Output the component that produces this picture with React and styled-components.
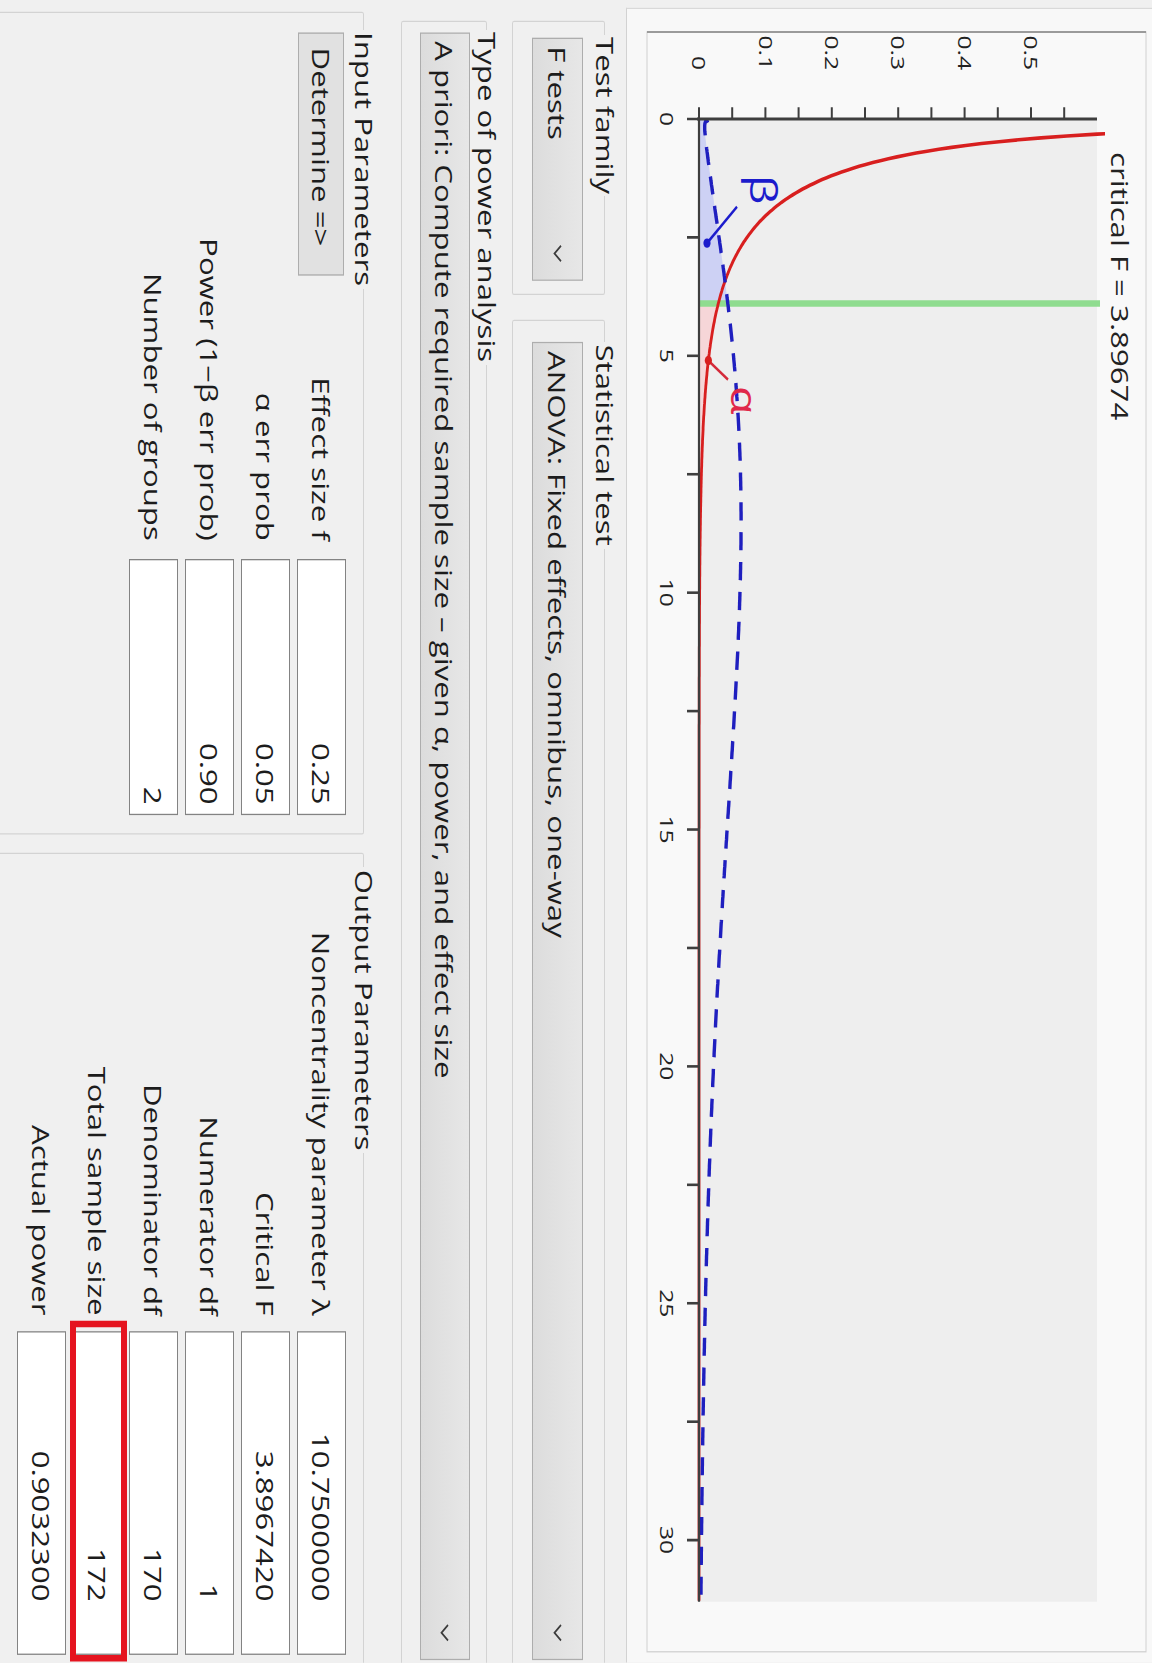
import React from 'react';
import styled, { createGlobalStyle } from 'styled-components';

const GlobalStyle = createGlobalStyle`
  html, body {
    margin: 0;
    padding: 0;
    background: #f0f0f0;
    overflow: hidden;
  }
`;

// ---- distribution math for the plot ----
const LANCZOS = [
  0.99999999999980993, 676.5203681218851, -1259.1392167224028,
  771.32342877765313, -176.61502916214059, 12.507343278686905,
  -0.13857109526572012, 9.9843695780195716e-6, 1.5056327351493116e-7,
];

function lgamma(z) {
  if (z < 0.5) return Math.log(Math.PI / Math.sin(Math.PI * z)) - lgamma(1 - z);
  z -= 1;
  let x = LANCZOS[0];
  for (let i = 1; i < 9; i++) x += LANCZOS[i] / (z + i);
  const t = z + 7.5;
  return 0.5 * Math.log(2 * Math.PI) + (z + 0.5) * Math.log(t) - t + Math.log(x);
}

function fDensity(x, a, b) {
  if (x <= 0) return 0;
  const lbeta = lgamma(a / 2) + lgamma(b / 2) - lgamma((a + b) / 2);
  const l = 0.5 * (a * Math.log(a * x) + b * Math.log(b) - (a + b) * Math.log(a * x + b));
  return Math.exp(l - Math.log(x) - lbeta);
}

// noncentral F as a Poisson mixture of central F densities
function ncfDensity(x, a, b, lambda) {
  let sum = 0;
  for (let j = 0; j < 60; j++) {
    const w = Math.exp(-lambda / 2 + j * Math.log(lambda / 2) - lgamma(j + 1));
    const aj = a + 2 * j;
    sum += w * (a / aj) * fDensity((x * a) / aj, aj, b);
  }
  return sum;
}

const DF1 = 1;
const DF2 = 170;
const LAMBDA = 10.75;
const CRIT = 3.89674;

const X0 = 91.5;
const XS = 36.44;
const XMAX = 31.3;
const Y0 = 453;
const YS = 664;
const TOP = 55;

const toU = (x) => X0 + x * XS;
const toV = (d) => Y0 - Math.min(d, 0.7) * YS;

const h0 = (x) => fDensity(x, DF1, DF2);
const h1 = (x) => ncfDensity(x, DF1, DF2, LAMBDA);

function sample(fn, from, to, step = 0.04) {
  const pts = [];
  for (let x = from; x <= to + 1e-9; x += step) pts.push([x, fn(x)]);
  return pts;
}

const line = (pts) =>
  pts.map(([x, d], i) => `${i ? 'L' : 'M'}${toU(x).toFixed(1)},${toV(d).toFixed(1)}`).join('');

const h0Pts = sample(h0, 0.04, XMAX);
const h1Pts = sample(h1, 0.02, XMAX);

const betaArea =
  `M${toU(0)},${Y0}` +
  sample(h1, 0.02, CRIT).map(([x, d]) => `L${toU(x).toFixed(1)},${toV(d).toFixed(1)}`).join('') +
  `L${toU(CRIT)},${toV(h1(CRIT))}L${toU(CRIT)},${Y0}Z`;

const alphaArea =
  `M${toU(CRIT)},${Y0}L${toU(CRIT)},${toV(h0(CRIT))}` +
  sample(h0, CRIT, XMAX).map(([x, d]) => `L${toU(x).toFixed(1)},${toV(d).toFixed(1)}`).join('') +
  `L${toU(XMAX)},${Y0}Z`;

const xTicks = Array.from({ length: 13 }, (_, i) => i * 2.5);
const yTicks = Array.from({ length: 12 }, (_, i) => i * 0.05);

// ---- layout ----
const Stage = styled.div`
  width: 1152px;
  height: 1663px;
  overflow: hidden;
  background: #f0f0f0;
`;

/* the dialog is laid out landscape and stood on its side, stretched along its length */
const Dialog = styled.div`
  width: 1279px;
  height: 1152px;
  box-sizing: border-box;
  padding-left: 6px;
  display: flex;
  flex-direction: column;
  overflow: hidden;
  background: #f0f0f0;
  color: #1c1c1c;
  font-family: "Open Sans", "Noto Sans", sans-serif;
  font-size: 24px;
  transform-origin: 0 0;
  transform: translateX(1152px) rotate(90deg) scaleX(1.3);
`;

const GraphPane = styled.div`
  flex: none;
  height: 526px;
  box-sizing: border-box;
  background: #f8f8f8;
  border-left: 1px solid #d9d9d9;
  border-bottom: 1px solid #d2d2d2;

  svg {
    display: block;
  }
`;

const Controls = styled.div`
  flex: 1;
  display: flex;
  flex-direction: column;
  padding-top: 6px;
  min-height: 0;
`;

const Row = styled.div`
  display: flex;
  gap: ${(p) => p.$gap || 0}px;
  margin-top: ${(p) => p.$top || 0}px;
  margin-right: -12px;
  margin-bottom: ${(p) => (p.$grow ? -8 : 0)}px;
  padding-left: ${(p) => p.$indent || 0}px;
  flex: ${(p) => (p.$grow ? 1 : 'none')};
  min-height: 0;
`;

const Group = styled.fieldset`
  margin: 0;
  min-width: 0;
  box-sizing: border-box;
  width: ${(p) => (p.$width ? `${p.$width}px` : 'auto')};
  flex: ${(p) => (p.$width ? 'none' : 1)};
  padding: ${(p) => p.$pad};
  border: 1px solid #d3d3d3;
  border-radius: 2px;
`;

const Caption = styled.legend`
  padding: 0 2px;
  margin-left: ${(p) => p.$shift ?? -2}px;
  line-height: 30px;
  white-space: nowrap;
`;

const Combo = styled.div`
  height: ${(p) => p.$h}px;
  box-sizing: border-box;
  display: flex;
  align-items: center;
  gap: 12px;
  padding: 0 13px 0 6px;
  background: linear-gradient(#e7e7e7, #dcdcdc);
  border: 1px solid #adadad;
  white-space: nowrap;

  span {
    flex: 1;
    overflow: hidden;
  }
`;

const ParamGrid = styled.div`
  display: grid;
  grid-template-columns: ${(p) => p.$cols};
  grid-auto-rows: 49px;
  row-gap: 7px;
  column-gap: ${(p) => p.$gap}px;
  align-items: center;
`;

const Determine = styled.button`
  grid-column: 1;
  grid-row: 1;
  height: 46px;
  margin: 0;
  padding: 0 0 0 11px;
  text-align: left;
  font: inherit;
  color: inherit;
  background: #e1e1e1;
  border: 1px solid #adadad;
  border-radius: 0;
`;

const ParamLabel = styled.div`
  grid-column: ${(p) => p.$col};
  justify-self: end;
  white-space: nowrap;
`;

const Field = styled.div`
  grid-column: ${(p) => p.$col};
  position: relative;
  height: 49px;
  box-sizing: border-box;
  display: flex;
  align-items: center;
  justify-content: flex-end;
  padding-right: ${(p) => p.$inset}px;
  background: #fff;
  border: 1px solid #838383;
`;

const Highlight = styled.div`
  position: absolute;
  top: -6px;
  bottom: -4px;
  left: -9px;
  right: -6px;
  border-style: solid;
  border-color: #e5141f;
  border-width: 6px 5px;
  pointer-events: none;
`;

const Chevron = () => (
  <svg width="14" height="9" viewBox="0 0 14 9">
    <polyline points="1,1 7,7.5 13,1" fill="none" stroke="#3c3c3c" strokeWidth="1.6" />
  </svg>
);

const Dropdown = ({ h, children }) => (
  <Combo $h={h}>
    <span>{children}</span>
    <Chevron />
  </Combo>
);

const Distribution = () => (
  <svg width="1272" height="525" viewBox="7 0 1272 525" fontFamily="'Open Sans', sans-serif">
    <defs>
      <clipPath id="plot-clip">
        <rect x={X0 - 2} y={TOP - 8} width={toU(XMAX) - X0 + 2} height={Y0 - TOP + 10} />
      </clipPath>
    </defs>

    <rect x="24.6" y="6" width="1246" height="499" fill="#f9f9f9" stroke="#d0d0d0" />
    <line x1="24.6" y1="6" x2="24.6" y2="505" stroke="#858585" strokeWidth="1.2" />

    <text x="117" y="41" fontSize="24" fill="#222">critical F = 3.89674</text>

    <rect x={X0} y={TOP} width={toU(XMAX) - X0} height={Y0 - TOP} fill="#eeeeee" />

    <g clipPath="url(#plot-clip)">
      <path d={alphaArea} fill="#f6d6d8" />
      <path d={betaArea} fill="#cdd1f4" />
      <line x1={toU(CRIT)} y1={Y0} x2={toU(CRIT)} y2={TOP - 3} stroke="#8fdc8f" strokeWidth="5" />
      <path d={line(h0Pts)} fill="none" stroke="#d81f1f" strokeWidth="2.8" />
      <path d={line(h1Pts)} fill="none" stroke="#1f1fbf" strokeWidth="3.4" strokeDasharray="14 9" />
    </g>

    <line x1={X0} y1={Y0 + 2} x2={X0} y2={TOP} stroke="#3e3e3e" strokeWidth="2.2" />
    <line x1={X0} y1={Y0} x2={toU(XMAX)} y2={Y0} stroke="#3e3e3e" strokeWidth="2.2" />

    {xTicks.map((t) => (
      <line key={`xt${t}`} x1={toU(t)} y1={Y0} x2={toU(t)} y2={Y0 + 12} stroke="#3e3e3e" strokeWidth="2" />
    ))}
    {yTicks.map((t) => (
      <line key={`yt${t}`} x1={X0 - 9} y1={toV(t)} x2={X0} y2={toV(t)} stroke="#3e3e3e" strokeWidth="2" />
    ))}

    {[0, 5, 10, 15, 20, 25, 30].map((t) => (
      <text key={`xl${t}`} x={toU(t)} y="492" fontSize="19" textAnchor="middle" fill="#222">
        {t}
      </text>
    ))}
    {[0, 0.1, 0.2, 0.3, 0.4, 0.5].map((t) => (
      <text key={`yl${t}`} x="54" y={toV(t)} dy="0.36em" fontSize="19" textAnchor="end" fill="#222">
        {t === 0 ? '0' : t.toFixed(1)}
      </text>
    ))}

    {/* beta and alpha markers */}
    <line x1="159" y1="415" x2="187" y2="445" stroke="#1c1ccc" strokeWidth="2.2" />
    <circle cx="187" cy="445" r="3.6" fill="#1c1ccc" />
    <text x="146" y="389" dy="0.35em" fontSize="36" textAnchor="middle" fill="#1c1ccc">β</text>

    <line x1="292" y1="424" x2={toU(5.1)} y2={toV(h0(5.1))} stroke="#d42a3a" strokeWidth="2.2" />
    <circle cx={toU(5.1)} cy={toV(h0(5.1))} r="3.6" fill="#d81f1f" />
    <text x="308" y="408" dy="0.35em" fontSize="36" textAnchor="middle" fill="#e0294a">α</text>
  </svg>
);

const inputs = [
  ['Effect size f', '0.25'],
  ['α err prob', '0.05'],
  ['Power (1−β err prob)', '0.90'],
  ['Number of groups', '2'],
];

const outputs = [
  ['Noncentrality parameter λ', '10.7500000'],
  ['Critical F', '3.8967420'],
  ['Numerator df', '1'],
  ['Denominator df', '170'],
  ['Total sample size', '172', true],
  ['Actual power', '0.9032300'],
];

export default function App() {
  return (
    <Stage>
      <GlobalStyle />
      <Dialog>
        <GraphPane>
          <Distribution />
        </GraphPane>

        <Controls>
          <Row $indent={10} $gap={19}>
            <Group $width={211} $pad="7px 10px 19px 11.5px">
              <Caption>Test family</Caption>
              <Dropdown h={51}>F tests</Dropdown>
            </Group>
            <Group $pad="7px 13px 19px 16px">
              <Caption $shift={0}>Statistical test</Caption>
              <Dropdown h={51}>ANOVA: Fixed effects, omnibus, one-way</Dropdown>
            </Group>
          </Row>

          <Row $indent={10} $top={10}>
            <Group $pad="2px 13px 18px 7.6px">
              <Caption>Type of power analysis</Caption>
              <Dropdown h={50}>A priori: Compute required sample size – given α, power, and effect size</Dropdown>
            </Group>
          </Row>

          <Row $indent={3} $top={22} $gap={14} $grow>
            <Group $width={633} $pad="3px 14px 0 14.6px">
              <Caption>Input Parameters</Caption>
              <ParamGrid $cols="187.4px 1fr 197px" $gap={14}>
                <Determine>Determine =&gt;</Determine>
                {inputs.map(([label, value], i) => (
                  <React.Fragment key={label}>
                    <ParamLabel $col={i === 0 ? '2' : '1 / 3'}>{label}</ParamLabel>
                    <Field $col="3" $inset={7}>{value}</Field>
                  </React.Fragment>
                ))}
              </ParamGrid>
            </Group>
            <Group $pad="3px 17px 0 14px">
              <Caption $shift={-4}>Output Parameters</Caption>
              <ParamGrid $cols="1fr 249px" $gap={12}>
                {outputs.map(([label, value, marked]) => (
                  <React.Fragment key={label}>
                    <ParamLabel $col="1">{label}</ParamLabel>
                    <Field $col="2" $inset={40}>
                      {value}
                      {marked && <Highlight />}
                    </Field>
                  </React.Fragment>
                ))}
              </ParamGrid>
            </Group>
          </Row>
        </Controls>
      </Dialog>
    </Stage>
  );
}
